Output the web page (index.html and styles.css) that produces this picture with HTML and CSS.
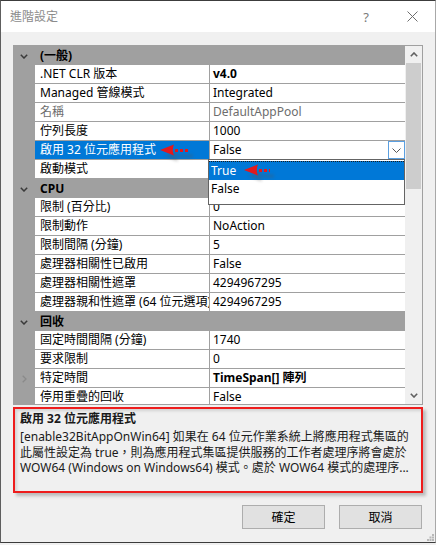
FILE: index.html
```html
<!DOCTYPE html>
<html lang="zh-Hant">
<head>
<meta charset="utf-8">
<title>進階設定</title>
<link rel="stylesheet" href="styles.css">
</head>
<body>
<div class="window">
  <header class="titlebar">
    <span class="title">進階設定</span>
    <span class="help">?</span>
    <span class="close"><svg width="11" height="11" viewBox="0 0 11 11"><path d="M0.5 0.5L10.5 10.5M10.5 0.5L0.5 10.5" stroke="#6e6e6e" stroke-width="1" fill="none"/></svg></span>
  </header>
  <main class="content">
    <div class="grid">
      <div class="rows">
        <div class="cat"><span class="gutter"><svg class="chev" width="8" height="5" viewBox="0 0 8 5"><path d="M0.8 0.8L4 4L7.2 0.8" stroke="#3a3a3a" stroke-width="1.5" fill="none"/></svg></span><span class="cat-label">(一般)</span></div>
        <div class="row"><span class="gutter"></span><span class="name">.NET CLR 版本</span><span class="value bold">v4.0</span></div>
        <div class="row"><span class="gutter"></span><span class="name">Managed 管線模式</span><span class="value">Integrated</span></div>
        <div class="row"><span class="gutter"></span><span class="name dim">名稱</span><span class="value dim">DefaultAppPool</span></div>
        <div class="row"><span class="gutter"></span><span class="name">佇列長度</span><span class="value">1000</span></div>
        <div class="row"><span class="gutter"></span><span class="name selected">啟用 32 位元應用程式</span><span class="value edit">False<span class="drop-btn"><svg width="9" height="5" viewBox="0 0 9 5"><path d="M0.5 0.5L4.5 4.5L8.5 0.5" stroke="#555" stroke-width="1" fill="none"/></svg></span></span></div>
        <div class="row"><span class="gutter"></span><span class="name">啟動模式</span><span class="value"></span></div>
        <div class="cat"><span class="gutter"><svg class="chev" width="8" height="5" viewBox="0 0 8 5"><path d="M0.8 0.8L4 4L7.2 0.8" stroke="#3a3a3a" stroke-width="1.5" fill="none"/></svg></span><span class="cat-label">CPU</span></div>
        <div class="row"><span class="gutter"></span><span class="name">限制 (百分比)</span><span class="value">0</span></div>
        <div class="row"><span class="gutter"></span><span class="name">限制動作</span><span class="value">NoAction</span></div>
        <div class="row"><span class="gutter"></span><span class="name">限制間隔 (分鐘)</span><span class="value">5</span></div>
        <div class="row"><span class="gutter"></span><span class="name">處理器相關性已啟用</span><span class="value">False</span></div>
        <div class="row"><span class="gutter"></span><span class="name">處理器相關性遮罩</span><span class="value">4294967295</span></div>
        <div class="row"><span class="gutter"></span><span class="name">處理器親和性遮罩 (64 位元選項)</span><span class="value">4294967295</span></div>
        <div class="cat"><span class="gutter"><svg class="chev" width="8" height="5" viewBox="0 0 8 5"><path d="M0.8 0.8L4 4L7.2 0.8" stroke="#3a3a3a" stroke-width="1.5" fill="none"/></svg></span><span class="cat-label">回收</span></div>
        <div class="row"><span class="gutter"></span><span class="name">固定時間間隔 (分鐘)</span><span class="value">1740</span></div>
        <div class="row"><span class="gutter"></span><span class="name">要求限制</span><span class="value">0</span></div>
        <div class="row"><span class="gutter"><svg class="expander" width="5" height="8" viewBox="0 0 5 8"><path d="M0.7 0.7L4 4L0.7 7.3" stroke="#8a8a8a" stroke-width="1.3" fill="none"/></svg></span><span class="name">特定時間</span><span class="value bold">TimeSpan[] 陣列</span></div>
        <div class="row"><span class="gutter"></span><span class="name">停用重疊的回收</span><span class="value">False</span></div>
      </div>
      <div class="scrollbar">
        <span class="sb-btn"><svg width="8" height="5" viewBox="0 0 8 5"><path d="M0.8 4.2L4 1L7.2 4.2" stroke="#606060" stroke-width="1.6" fill="none"/></svg></span>
        <span class="sb-track"><span class="sb-thumb"></span></span>
        <span class="sb-btn"><svg width="8" height="5" viewBox="0 0 8 5"><path d="M0.8 0.8L4 4L7.2 0.8" stroke="#606060" stroke-width="1.6" fill="none"/></svg></span>
      </div>

      <div class="dropdown">
        <div class="opt active">True</div>
        <div class="opt">False</div>
      </div>

      <svg class="arrow arrow-one" width="40" height="24" viewBox="0 0 40 24">
        <defs><filter id="blur1" x="-30%" y="-50%" width="160%" height="200%"><feGaussianBlur stdDeviation="1.6"/></filter></defs>
        <g transform="translate(4 6)" opacity="0.35" filter="url(#blur1)">
          <path d="M1 6L15 0.5Q12.5 6 15 11.5Z" fill="#555"/>
          <path d="M15 6H30" stroke="#555" stroke-width="3"/>
        </g>
        <path d="M1 6L15 0.5Q12.5 6 15 11.5Z" fill="#e3191c"/>
        <path d="M16 6.5H30" stroke="#e3191c" stroke-width="3" stroke-dasharray="3 2"/>
      </svg>
      <svg class="arrow arrow-two" width="40" height="24" viewBox="0 0 40 24">
        <defs><filter id="blur2" x="-30%" y="-50%" width="160%" height="200%"><feGaussianBlur stdDeviation="1.6"/></filter></defs>
        <g transform="translate(4 6)" opacity="0.35" filter="url(#blur2)">
          <path d="M1 6L15 0.5Q12.5 6 15 11.5Z" fill="#555"/>
          <path d="M15 6H27" stroke="#555" stroke-width="3"/>
        </g>
        <path d="M1 6L15 0.5Q12.5 6 15 11.5Z" fill="#e3191c"/>
        <path d="M16 6.5H27" stroke="#e3191c" stroke-width="3" stroke-dasharray="3 2"/>
      </svg>
    </div>

    <section class="help-pane">
      <div class="help-title">啟用 32 位元應用程式</div>
      <p class="help-text">[enable32BitAppOnWin64] 如果在 64 位元作業系統上將應用程式集區的<br>此屬性設定為 true，則為應用程式集區提供服務的工作者處理序將會處於<br>WOW64 (Windows on Windows64) 模式。處於 WOW64 模式的處理序...</p>
    </section>

    <div class="buttons">
      <button class="btn">確定</button>
      <button class="btn">取消</button>
    </div>
  </main>
  <svg class="grip" width="7" height="7" viewBox="0 0 7 7">
    <rect x="5" y="0" width="2" height="2" fill="#b8b8b8"/>
    <rect x="2.5" y="2.5" width="2" height="2" fill="#b8b8b8"/>
    <rect x="5" y="2.5" width="2" height="2" fill="#b8b8b8"/>
    <rect x="0" y="5" width="2" height="2" fill="#b8b8b8"/>
    <rect x="2.5" y="5" width="2" height="2" fill="#b8b8b8"/>
    <rect x="5" y="5" width="2" height="2" fill="#b8b8b8"/>
  </svg>
</div>
</body>
</html>
```

FILE: styles.css
```css
html, body {
  margin: 0;
  padding: 0;
  background: #f0f0f0;
}

body {
  font-family: "Noto Sans", "Noto Sans CJK TC", sans-serif;
  font-size: 12px;
  color: #000;
}

.window {
  position: relative;
  width: 436px;
  height: 543px;
  box-sizing: border-box;
  border-top: 1px solid #3c3c3c;
  border-left: 1px solid #5e5e5e;
  border-right: 1px solid #a8a8a8;
  border-bottom: 1px solid #3c3c3c;
  background: #f0f0f0;
  display: flex;
  flex-direction: column;
}

/* Title bar */
.titlebar {
  height: 31px;
  flex: none;
  background: #fff;
  display: flex;
  align-items: center;
}

.title {
  padding-left: 9px;
  color: #8c8c8c;
  font-size: 12px;
  line-height: 16px;
}

.help {
  margin-left: auto;
  width: 46px;
  text-align: center;
  color: #7a7a7a;
  font-size: 13px;
  line-height: 16px;
}

.close {
  width: 46px;
  display: flex;
  justify-content: center;
  align-items: center;
}

/* Content */
.content {
  padding: 13px 0 0 12px;
  display: flex;
  flex-direction: column;
}

.grid {
  position: relative;
  width: 410px;
  height: 360px;
  box-sizing: border-box;
  border: 1px solid #a0a0a0;
  background: #fff;
  display: flex;
}

.rows {
  width: 391px;
  overflow: hidden;
  flex: none;
}

.row,
.cat {
  display: flex;
  height: 19px;
}

.cat {
  background: #a0a0a0;
}

.gutter {
  width: 21px;
  flex: none;
  background: #a0a0a0;
  display: flex;
  align-items: center;
}

.chev {
  margin-left: 6px;
  margin-top: 1px;
}

.expander {
  margin-left: 8px;
}

.cat-label {
  padding-left: 5px;
  line-height: 19px;
  font-weight: bold;
}

.name {
  width: 169px;
  flex: none;
  padding-left: 5px;
  height: 18px;
  line-height: 18px;
  border-right: 1px solid #a0a0a0;
  border-bottom: 1px solid #a0a0a0;
  white-space: nowrap;
  overflow: hidden;
}

.value {
  flex: 1;
  padding-left: 3px;
  height: 18px;
  line-height: 18px;
  border-bottom: 1px solid #a0a0a0;
  white-space: nowrap;
  overflow: hidden;
  display: flex;
}

.bold {
  font-weight: bold;
}

.dim {
  color: #6d6d6d;
}

.name.selected {
  background: #0078d7;
  color: #fff;
}

.drop-btn {
  margin-left: auto;
  width: 15px;
  height: 16px;
  border: 1px solid #5b9fe0;
  background: #fff;
  display: flex;
  align-items: center;
  justify-content: center;
}

/* Scrollbar */
.scrollbar {
  width: 17px;
  flex: none;
  background: #f0f0f0;
  display: flex;
  flex-direction: column;
}

.sb-btn {
  height: 17px;
  flex: none;
  display: flex;
  align-items: center;
  justify-content: center;
}

.sb-track {
  flex: 1;
  display: flex;
  flex-direction: column;
}

.sb-thumb {
  margin: 0 1px;
  height: 126px;
  background: #cdcdcd;
}

/* Open dropdown list (overlay) */
.dropdown {
  position: absolute;
  left: 194px;
  top: 113px;
  width: 195px;
  height: 43px;
  border: 1px solid #646464;
  background: #fff;
  padding-top: 1px;
  box-sizing: content-box;
}

.opt {
  height: 19px;
  line-height: 18px;
  padding-left: 2px;
  box-sizing: border-box;
}

.opt.active {
  background: #0078d7;
  color: #fff;
  border-top: 1px dotted #1c1c1c;
  line-height: 17px;
}

/* Annotation arrows (overlay) */
.arrow {
  position: absolute;
}

.arrow-one {
  left: 145px;
  top: 98px;
}

.arrow-two {
  left: 229px;
  top: 118px;
}

/* Help pane with red annotation frame */
.help-pane {
  margin-top: 2px;
  width: 410px;
  height: 86px;
  box-sizing: border-box;
  border: 2px solid #ee1d1d;
  box-shadow: 3px 3px 3px rgba(0, 0, 0, 0.22), inset 2px 2px 3px rgba(0, 0, 0, 0.12);
  padding: 2px 5px 0 5px;
  color: #1a1a1a;
}

.help-title {
  font-weight: bold;
  line-height: 16px;
  margin-bottom: 2px;
}

.help-text {
  margin: 0;
  line-height: 15.5px;
  white-space: nowrap;
}

/* Buttons */
.buttons {
  margin-top: 12px;
  padding-right: 13px;
  display: flex;
  justify-content: flex-end;
  gap: 14px;
}

.btn {
  width: 83px;
  height: 24px;
  box-sizing: border-box;
  border: 1px solid #adadad;
  background: #e1e1e1;
  font-family: "Noto Sans", "Noto Sans CJK TC", sans-serif;
  font-size: 12px;
  color: #000;
  padding: 0;
}

.grip {
  position: absolute;
  right: 1px;
  bottom: 1px;
}
```
